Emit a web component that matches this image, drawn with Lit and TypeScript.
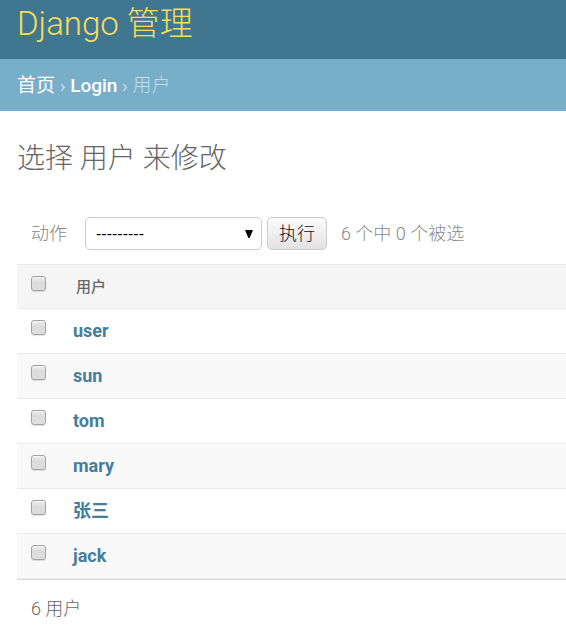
import { LitElement, html, css } from "lit";
import { customElement, property, state } from "lit/decorators.js";

@customElement("user-table")
class UserTable extends LitElement {
  @property({ type: Array }) users: string[] = [];
  @property({ type: Array }) selected: string[] = [];

  static styles = css`
    :host {
      display: block;
    }
    .results {
      width: 100%;
      border-collapse: separate;
      border-spacing: 0;
      border-bottom: 1px solid #d9d9d9;
    }
    .cell {
      box-sizing: border-box;
      height: 45px;
      padding: 0;
      border-bottom: 1px solid #ebebeb;
      text-align: left;
      font-size: 18px;
      line-height: 24px;
    }
    .tick {
      width: 56px;
      padding: 11px 14px 0;
      vertical-align: top;
      line-height: 0;
    }
    .head {
      background: #f5f5f5;
      border-top: 1px solid #ebebeb;
    }
    .label {
      padding-left: 3px;
      color: #666;
      font-size: 15px;
      font-weight: 500;
    }
    .row:nth-child(even) {
      background: #f9f9f9;
    }
    .link {
      color: #447e9b;
      font-weight: 700;
      text-decoration: none;
    }
    .box {
      appearance: none;
      display: block;
      width: 15px;
      height: 15px;
      margin: 0;
      border: 1px solid #a2a2a2;
      border-radius: 3px;
      background: linear-gradient(#ededed, #dcdcdc 40%, #dedede);
      box-shadow:
        0 1px 1px rgba(0, 0, 0, 0.12),
        inset 0 1px 1px rgba(255, 255, 255, 0.7);
    }
    .box:checked {
      background: #447e9b;
    }
  `;

  private emit(names: string[]) {
    this.dispatchEvent(new CustomEvent("select-users", { detail: names }));
  }

  private toggle(name: string) {
    this.emit(
      this.selected.includes(name)
        ? this.selected.filter((n) => n !== name)
        : [...this.selected, name],
    );
  }

  render() {
    const all = this.users.length > 0 && this.selected.length === this.users.length;
    return html`
      <table class="results">
        <thead>
          <tr>
            <th class="cell head tick" scope="col">
              <input class="box" type="checkbox" aria-label="全选" .checked=${all}
                @change=${() => this.emit(all ? [] : [...this.users])} />
            </th>
            <th class="cell head label" scope="col">用户</th>
          </tr>
        </thead>
        <tbody>
          ${this.users.map(
            (name) => html`
              <tr class="row">
                <td class="cell tick">
                  <input class="box" type="checkbox" aria-label=${name}
                    .checked=${this.selected.includes(name)}
                    @change=${() => this.toggle(name)} />
                </td>
                <td class="cell"><a class="link" href="#${name}">${name}</a></td>
              </tr>
            `,
          )}
        </tbody>
      </table>
    `;
  }
}

@customElement("app-root")
class AppRoot extends LitElement {
  @state() private users = ["user", "sun", "tom", "mary", "张三", "jack"];
  @state() private selected: string[] = [];

  static styles = css`
    :host {
      display: block;
      background: #fff;
      color: #666;
      font-family: Roboto, "Noto Sans CJK SC", sans-serif;
      font-size: 18px;
      font-weight: 300;
      line-height: 24px;
    }
    .header {
      padding: 4px 17px 15px;
      background: #417690;
    }
    .brand {
      margin: 0;
      color: #f5dd5d;
      font-size: 33px;
      font-weight: 300;
      line-height: 40px;
    }
    .crumbs {
      padding: 15px 17px 13px;
      background: #79aec8;
      color: #c4dce8;
      font-size: 19px;
      font-weight: 400;
    }
    .crumb {
      color: #fff;
      text-decoration: none;
    }
    .app {
      font-weight: 500;
    }
    .current {
      font-weight: 300;
    }
    .content {
      padding: 28px 0 8px 17px;
    }
    .title {
      margin: 0 0 38px;
      font-size: 28px;
      font-weight: 300;
      line-height: 40px;
    }
    .actions {
      display: flex;
      align-items: center;
      padding: 0 14px;
      margin-bottom: 14px;
      color: #888;
    }
    .field {
      display: flex;
      align-items: center;
      gap: 18px;
    }
    .picker {
      display: grid;
      align-items: center;
    }
    .select {
      grid-area: 1 / 1;
      appearance: none;
      box-sizing: border-box;
      width: 177px;
      height: 33px;
      padding: 0 24px 0 10px;
      border: 1px solid #ccc;
      border-radius: 5px;
      background: #fff;
      color: #000;
      font: 400 16px "Liberation Sans", "Noto Sans CJK SC", sans-serif;
    }
    .arrow {
      grid-area: 1 / 1;
      justify-self: end;
      width: 8px;
      height: 8px;
      margin-right: 9px;
      pointer-events: none;
    }
    .run {
      box-sizing: border-box;
      width: 60px;
      height: 33px;
      margin: 0 14px 0 5px;
      padding: 0;
      border: 1px solid #ccc;
      border-radius: 5px;
      background: linear-gradient(#fcfcfc, #e2e2e2);
      color: #111;
      font: inherit;
    }
    .total {
      margin: 0;
      padding: 17px 14px;
    }
  `;

  render() {
    return html`
      <header class="header"><h1 class="brand">Django 管理</h1></header>
      <nav class="crumbs">
        <a class="crumb" href="#home">首页</a> ›
        <a class="crumb app" href="#login">Login</a> ›
        <span class="current">用户</span>
      </nav>
      <main class="content">
        <h2 class="title">选择 用户 来修改</h2>
        <div class="actions">
          <label class="field">
            动作
            <span class="picker">
              <select class="select">
                <option>---------</option>
                <option>删除所选的 用户</option>
              </select>
              <svg class="arrow" viewBox="0 0 8 8" aria-hidden="true">
                <path d="M0 0h8L4.6 8H3.4z" fill="#000" />
              </svg>
            </span>
          </label>
          <button class="run" type="button">执行</button>
          <span>${this.users.length} 个中 ${this.selected.length} 个被选</span>
        </div>
        <user-table
          .users=${this.users}
          .selected=${this.selected}
          @select-users=${(e: CustomEvent<string[]>) => (this.selected = e.detail)}
        ></user-table>
        <p class="total">${this.users.length} 用户</p>
      </main>
    `;
  }
}
